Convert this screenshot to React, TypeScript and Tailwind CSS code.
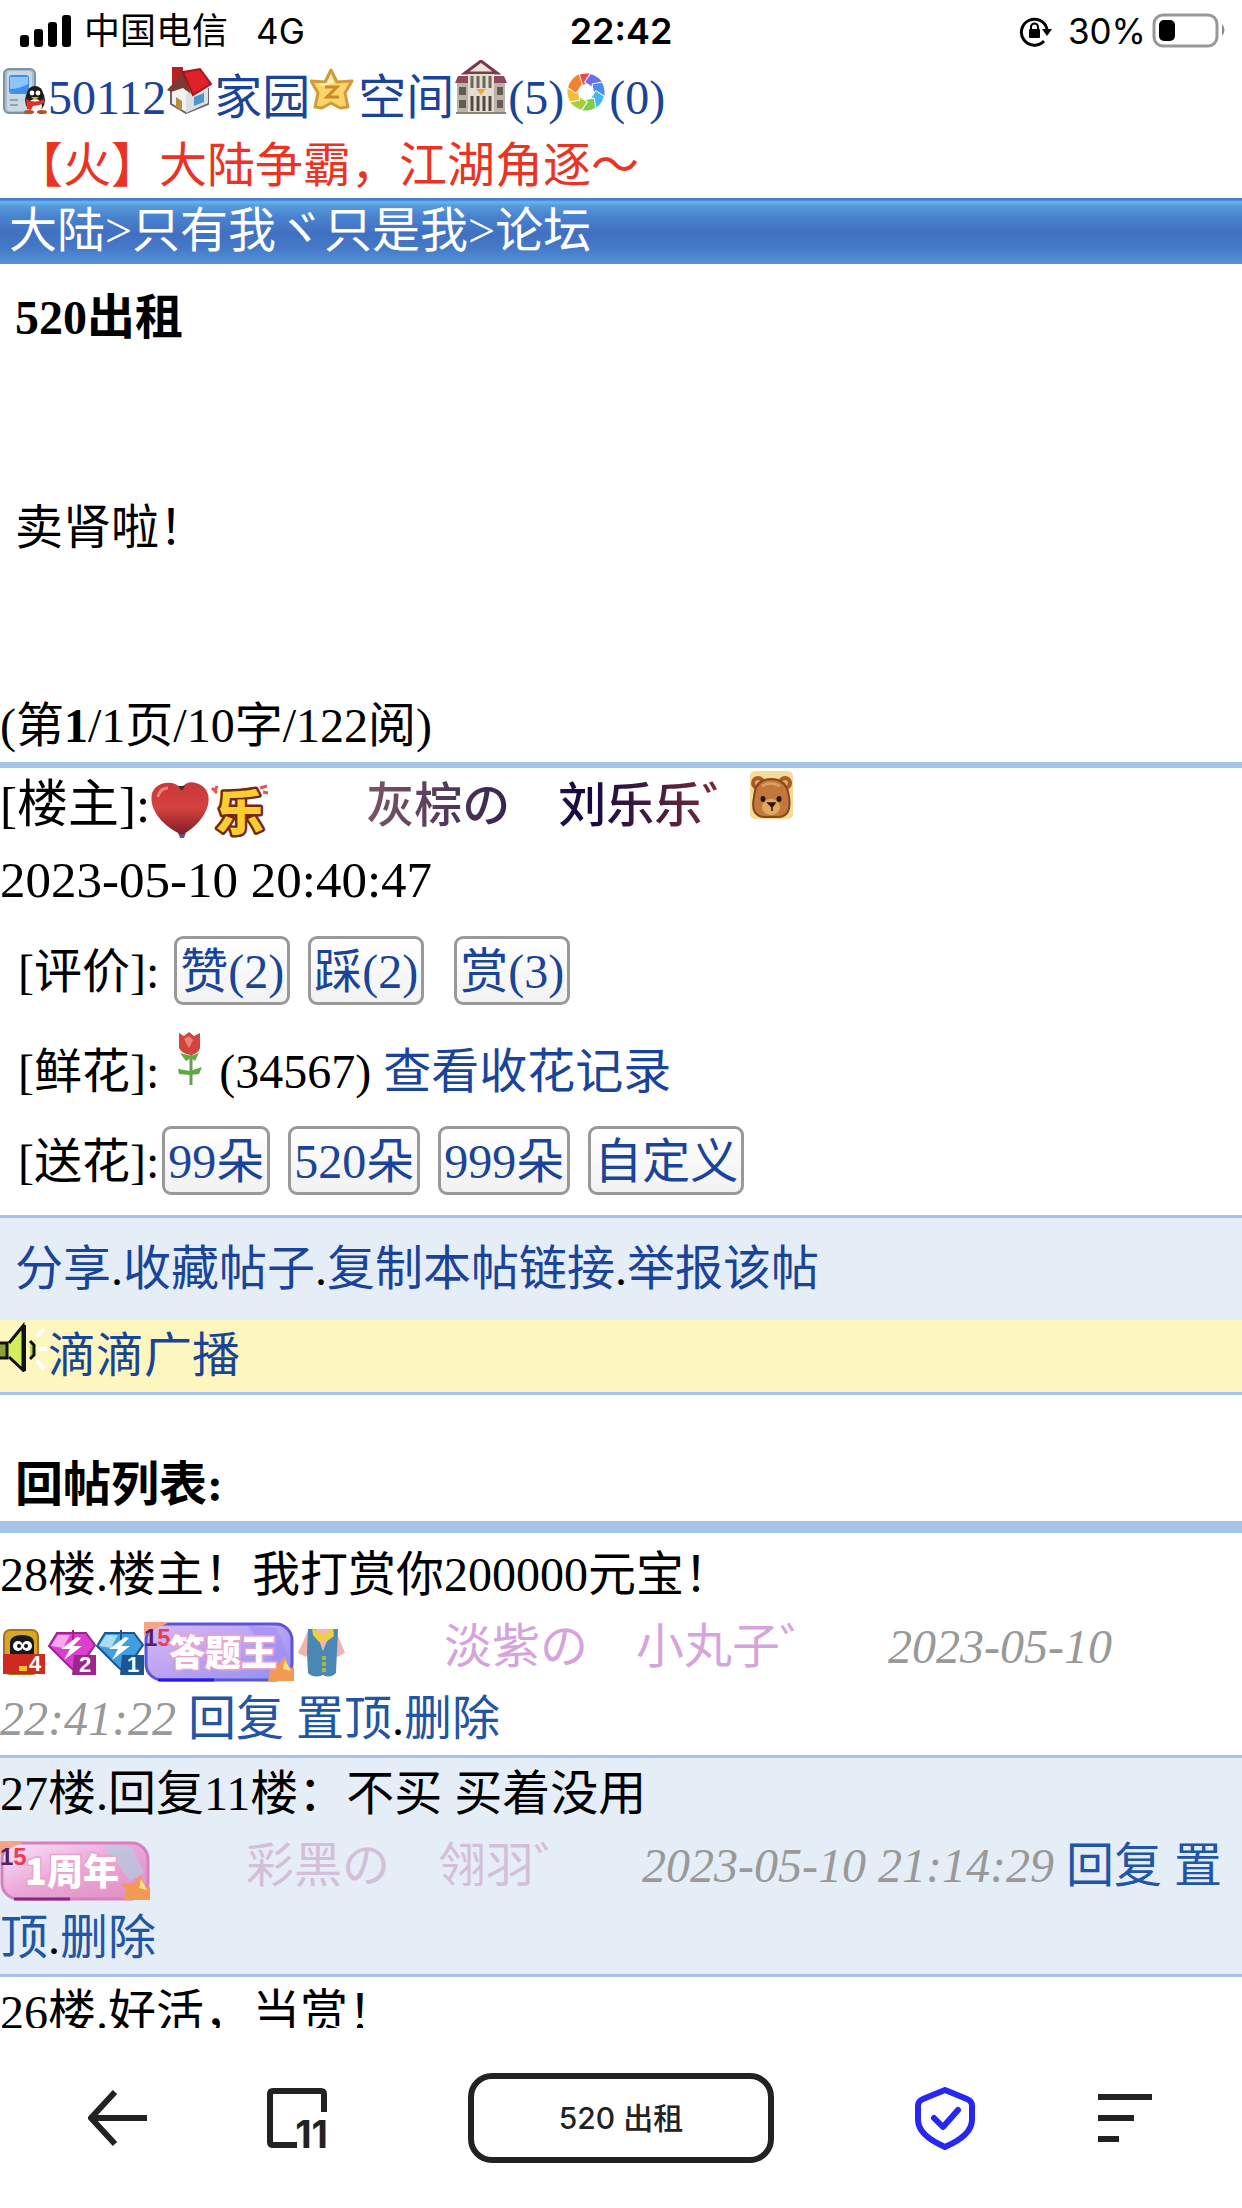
import type { ReactNode } from 'react';

interface Reply {
  id: number;
  texto: string;
  autor: string;
  color: string;
  fecha: string;
  iconos: ReactNode;
}

const inlineIcon = 'inline-block align-baseline';
const badgeIcon = 'inline-block align-middle overflow-visible';

function PhoneIcon() {
  return (
    <svg className={inlineIcon} width="48" height="48" viewBox="0 0 48 48">
      <rect x="4" y="3" width="31" height="44" rx="5" fill="#a9bccb" stroke="#7d92a3" strokeWidth="2" />
      <rect x="7" y="5" width="25" height="40" rx="3" fill="#c9d8e3" />
      <rect x="9" y="9" width="20" height="19" rx="3" fill="#3f8ff0" />
      <path d="M10 11h18v7q-9 5-18 5z" fill="#8cc4fb" />
      <path d="M10 34h8M10 39h8" stroke="#8fa3b3" strokeWidth="2" />
      <ellipse cx="35" cy="34" rx="10" ry="12" fill="#222" />
      <ellipse cx="35" cy="28" rx="8" ry="8" fill="#1b1b1b" />
      <ellipse cx="35" cy="40" rx="7" ry="7" fill="#fff" />
      <circle cx="32" cy="27" r="2.4" fill="#fff" />
      <circle cx="38" cy="27" r="2.4" fill="#fff" />
      <path d="M31 31h8l-4 3z" fill="#f5a623" />
      <path d="M26 33q9 5 18 0v4q-5 3-11 3l-2 4-4-1z" fill="#e0302a" />
      <ellipse cx="29" cy="46" rx="5" ry="2" fill="#b5541c" />
      <ellipse cx="42" cy="46" rx="5" ry="2" fill="#b5541c" />
    </svg>
  );
}

function HouseIcon() {
  return (
    <svg className={inlineIcon} width="48" height="48" viewBox="0 0 48 48">
      <path d="M5 24l15-12 22 11v15L20 47 5 38z" fill="#f4f2f0" stroke="#6d6260" strokeWidth="2" />
      <path d="M20 28l22-8v17L20 47z" fill="#dcdfe2" />
      <path d="M6 1h11v14l-8 7H6z" fill="#b82025" />
      <path d="M1 24L18 6l7 22-8-6-12 4z" fill="#7c3a35" />
      <path d="M17 6L34 3l11 15-18 11z" fill="#dd2228" stroke="#a3161c" strokeWidth="2" />
      <path d="M28 31l10-4v9l-10 4z" fill="#4d94c8" />
      <path d="M10 31l6 4v10l-6-4z" fill="#b78d45" />
    </svg>
  );
}

function StarIcon() {
  return (
    <svg className={inlineIcon} width="48" height="48" viewBox="0 0 48 48">
      <path
        d="M21 4l6 12 15-1-7 12 3 14-8 1-9-5-9 5-7-1 3-14-7-12 14 1z"
        fill="#fbd568"
        stroke="#d29a3c"
        strokeWidth="3"
        strokeLinejoin="round"
      />
      <path d="M21 8l3 9-11 3-5-2 9-1z" fill="#fff3bd" />
      <path d="M15 21h12L17 31h12" fill="none" stroke="#c98a2b" strokeWidth="3" />
    </svg>
  );
}

function BuildingIcon() {
  return (
    <svg className={inlineIcon} width="54" height="54" viewBox="0 0 54 54">
      <path d="M3 18h48v34H3z" fill="#bdb4a8" />
      <path d="M1 23l3-7h46l3 7z" fill="#8e4a5c" />
      <path d="M11 13L27 1l16 12z" fill="#ece6dc" stroke="#7b3a4c" strokeWidth="3" />
      <rect x="14" y="14" width="26" height="38" fill="#e4ddcf" />
      <path d="M18 16v12M24 16v12M30 16v12M36 16v12" stroke="#6d665c" strokeWidth="3" />
      <path d="M18 36v15M24 36v15M30 36v15M36 36v15" stroke="#4f4a44" strokeWidth="3" />
      <path d="M5 27h7v8H5zM43 27h6v8h-6zM5 40h7v8H5zM43 40h6v8h-6z" fill="#625c54" />
      <path d="M22 29h10l-5 6z" fill="#e9a93c" />
      <path d="M2 53h50" stroke="#8c8478" strokeWidth="2" />
    </svg>
  );
}

function WheelIcon() {
  const blades = ['#ea4a50', '#6a6ee8', '#4a8df0', '#45b5f5', '#7ccf4a', '#a5d03c', '#f5bd35', '#f08230'];
  return (
    <svg className={inlineIcon} width="45" height="45" viewBox="0 0 45 45">
      {blades.map((c, i) => (
        <path
          key={c}
          d="M12 7Q20 2 30 5L25 15 14 17z"
          fill={c}
          stroke="#fff"
          strokeWidth="1"
          transform={`rotate(${i * 45} 22 23)`}
        />
      ))}
    </svg>
  );
}

function HeartIcon() {
  return (
    <svg className={badgeIcon} width="60" height="60" viewBox="0 0 60 60">
      <defs>
        <linearGradient id="heart" x1="0" y1="0" x2="0" y2="1">
          <stop offset="0" stopColor="#c8383a" />
          <stop offset="0.5" stopColor="#d5413f" />
          <stop offset="1" stopColor="#7d1c22" />
        </linearGradient>
      </defs>
      <path d="M28 53h8l-2 5h-4z" fill="#4a62a5" />
      <path d="M31 8Q38-1 49 4q12 6 9 21-5 18-26 30Q7 43 2 24-1 9 11 4q12-4 20 4z" fill="url(#heart)" />
      <path d="M28 6h7l-3 5z" fill="#4b2730" />
      <path d="M8 17q2-9 10-9" fill="none" stroke="#e8817a" strokeWidth="3" />
    </svg>
  );
}

function JoyIcon() {
  return (
    <svg className={badgeIcon} width="60" height="60" viewBox="0 0 60 60">
      <path d="M2 8l5 5M7 6l-2 5M50 8l7-2M53 12l5 1" stroke="#e2574f" strokeWidth="3" />
      <text
        x="6"
        y="50"
        fontFamily="Noto Sans CJK SC"
        fontSize="48"
        fontWeight="900"
        fill="#f8cf2c"
        stroke="#742714"
        strokeWidth="5"
        strokeLinejoin="round"
        paintOrder="stroke"
      >
        乐
      </text>
    </svg>
  );
}

function BearIcon() {
  return (
    <svg className={inlineIcon} width="45" height="51" viewBox="0 0 45 51">
      <rect x="0" y="0" width="43" height="48" rx="5" fill="#f6dc9c" />
      <circle cx="8" cy="12" r="7" fill="#a85b26" />
      <circle cx="35" cy="12" r="7" fill="#a85b26" />
      <circle cx="8" cy="12" r="3" fill="#e6a560" />
      <circle cx="35" cy="12" r="3" fill="#e6a560" />
      <path d="M4 26Q5 8 21 8t18 18q3 19-10 20H14Q0 45 4 26z" fill="#c1783a" stroke="#8a4519" strokeWidth="2" />
      <ellipse cx="21" cy="36" rx="9" ry="8" fill="#e3a765" />
      <ellipse cx="13" cy="28" rx="2.5" ry="3" fill="#2c1508" />
      <ellipse cx="29" cy="28" rx="2.5" ry="3" fill="#2c1508" />
      <path d="M18 32h7l-3 4zM22 36v4" fill="#2c1508" stroke="#2c1508" strokeWidth="1.5" />
      <path d="M12 15q9-5 18 0" stroke="#dc9c5b" strokeWidth="3" fill="none" />
    </svg>
  );
}

function RoseIcon() {
  return (
    <svg className={inlineIcon} width="36" height="57" viewBox="0 0 36 57">
      <path d="M20 20v34" stroke="#6a9a5c" strokeWidth="3" />
      <path d="M9 22l11 3 8-3-4 8-4-3-5 3zM7 38l12 2 12-4-3 7-9 1-11-1z" fill="#5bab3f" />
      <path d="M8 2l5 3 5-4 5 4 6-3v15q-2 6-9 7-9-1-12-7z" fill="#d2453f" />
      <path d="M13 8l5-3 4 4-4 8z" fill="#e9827a" />
    </svg>
  );
}

function SpeakerIcon() {
  return (
    <svg className={inlineIcon} width="48" height="51" viewBox="0 -4 48 51">
      <path d="M0 17h9L22 1v44L9 33H0z" fill="#d2ee5c" />
      <path d="M0 18h7v15H0" fill="#8aa336" stroke="#111" strokeWidth="3" />
      <path d="M9 18L23 1v44L9 32" fill="none" stroke="#111" strokeWidth="3" />
      <path d="M25 0v46" stroke="#111" strokeWidth="2" />
      <path d="M30 16l4 4v10l-4 4" fill="#b7d84c" stroke="#111" strokeWidth="3" />
      <path d="M37 12l7-8M39 24h8M37 36l7 8" stroke="#fff" strokeWidth="4" />
    </svg>
  );
}

function LevelIcon() {
  return (
    <svg className={badgeIcon} width="48" height="48" viewBox="0 0 48 48">
      <rect x="4" y="2" width="34" height="44" rx="6" fill="#d9a52b" stroke="#a87413" strokeWidth="2" />
      <path d="M10 28V14q1-7 12-7t12 7v14z" fill="#171a1c" />
      <circle cx="18" cy="18" r="5" fill="#fff" />
      <circle cx="27" cy="18" r="5" fill="#fff" />
      <circle cx="19" cy="18" r="2" fill="#111" />
      <circle cx="26" cy="18" r="2" fill="#111" />
      <rect x="3" y="26" width="42" height="20" fill="#cf2a20" />
      <path d="M19 38h8v5h-8z" fill="#f4c52c" />
      <text x="29" y="43" fontFamily="Liberation Sans" fontSize="22" fontWeight="700" fill="#fff">4</text>
    </svg>
  );
}

function DiamondIcon({ level, base, light, dark }: { level: string; base: string; light: string; dark: string }) {
  return (
    <svg className={badgeIcon} width="48" height="48" viewBox="0 0 48 48">
      <path d="M9 5h29l9 12-16 23q-5 4-9-1L1 18z" fill={base} stroke={dark} strokeWidth="2" />
      <path d="M10 7h12L15 20 3 18z" fill={light} />
      <path d="M25 2v12" stroke={dark} strokeWidth="2" />
      <path d="M29 9L13 21h9l-6 11 18-14h-9l8-8z" fill="#fff" />
      <path d="M26 27h22v20H24z" fill={dark} />
      <text x="31" y="44" fontFamily="Liberation Sans" fontSize="22" fontWeight="700" fill="#fff">{level}</text>
    </svg>
  );
}

function Banner({ id, label, colors }: { id: string; label: string; colors: string[] }) {
  return (
    <svg className={badgeIcon} width="150" height="60" viewBox="0 0 150 60">
      <defs>
        <linearGradient id={id} x1="0" y1="0" x2="1" y2="1">
          <stop offset="0" stopColor={colors[0]} />
          <stop offset="0.5" stopColor={colors[1]} />
          <stop offset="1" stopColor={colors[2]} />
        </linearGradient>
      </defs>
      <rect x="2" y="2" width="146" height="56" rx="16" fill={`url(#${id})`} stroke={colors[3]} strokeWidth="3" />
      <path d="M14 58h56" stroke={colors[4]} strokeWidth="3" />
      <path d="M104 4l28 2 12 26-14 8z" fill={colors[5]} opacity="0.6" />
      <path d="M141 34l3 11 6 1v13h-26l2-10-4-6 13-1z" fill="#f29a52" />
      <path d="M141 38l-2 9 8 2z" fill="#fde08a" />
      <path d="M0 0h26L13 6 0 14z" fill="#f6a487" />
      <text y="24" fontFamily="Liberation Sans" fontSize="24" fontWeight="700">
        <tspan fill="#542063">1</tspan>
        <tspan fill="#ea3a55">5</tspan>
      </text>
      <text
        x="25"
        y="44"
        fontFamily="Noto Sans CJK SC"
        fontSize="36"
        fontWeight="900"
        fill="#fff"
        stroke="#e9a3cd"
        strokeWidth="3"
        paintOrder="stroke"
      >
        {label}
      </text>
    </svg>
  );
}

function VestIcon() {
  return (
    <svg className={badgeIcon} width="54" height="54" viewBox="0 0 54 54">
      <path d="M14 6L4 28l8 4 5-10zM42 6l9 22-8 4-5-10z" fill="#f1b3ae" />
      <path d="M20 4h18l-8 24z" fill="#f0b7ac" />
      <path d="M14 4h7l8 22 9-22h6l-2 44q-6 6-13 2-9 4-15-2L13 28z" fill="#4a87b5" />
      <path d="M18 3l12 8 9-8 1 8-8 6-3-3-4 3-6-7z" fill="#ecd03d" />
      <path d="M30 31v16" stroke="#a4bb42" strokeWidth="4" strokeDasharray="4 2" />
    </svg>
  );
}

const link = 'text-[#1a4499]';
const replyLink = 'text-[#2155a5]';
const actionButton =
  'mx-[3px] inline-block h-[69px] rounded-[9px] border-[3px] border-[#999] bg-linear-to-b from-white to-[#f2f2f2] px-[3px] pt-[3px] leading-[60px] text-[#1a4499]';

const replies: Reply[] = [
  {
    id: 28,
    texto: '28楼.楼主！我打赏你200000元宝！',
    autor: '淡紫の　小丸子゛',
    color: 'text-[#d6a4dc]',
    fecha: '2023-05-10 22:41:22',
    iconos: (
      <>
        <LevelIcon />
        <DiamondIcon level="2" base="#dc3fd0" light="#f7a8ee" dark="#9c2590" />
        <DiamondIcon level="1" base="#3f9fe0" light="#a9dcf7" dark="#1c5590" />
        <Banner
          id="quiz"
          label="答题王"
          colors={['#dcb8f0', '#b9a3f3', '#8f8ff0', '#5a55dc', '#2a18f0', '#9f8cf5']}
        />
        <VestIcon />
      </>
    ),
  },
  {
    id: 27,
    texto: '27楼.回复11楼：不买 买着没用',
    autor: '彩黑の　翎羽゛',
    color: 'text-[#d4bfd8]',
    fecha: '2023-05-10 21:14:29',
    iconos: (
      <Banner
        id="year"
        label="1周年"
        colors={['#f6e6fb', '#eba6d8', '#e08cc0', '#d77fc0', '#8c2585', '#a9d3e2']}
      />
    ),
  },
  { id: 26, texto: '26楼.好活，当赏！', autor: '', color: '', fecha: '', iconos: null },
];

function StatusBar() {
  return (
    <header className="grid h-[60px] shrink-0 grid-cols-[1fr_auto_1fr] items-center px-[15px] pt-[2px] font-[Inter,'Noto_Sans_CJK_SC',sans-serif] leading-none text-black">
      <div className="flex items-center text-[35px]">
        <svg width="57" height="34" viewBox="0 0 57 34">
          <rect x="5" y="21" width="9" height="12" rx="3" />
          <rect x="19" y="15" width="9" height="18" rx="3" />
          <rect x="33" y="8" width="9" height="25" rx="3" />
          <rect x="47" y="1" width="9" height="32" rx="3" />
        </svg>
        <span className="ml-3 text-[36px]">中国电信</span>
        <span className="ml-[28px]">4G</span>
      </div>
      <time className="text-[36px] font-semibold">22:42</time>
      <div className="flex items-center justify-end text-[35px]">
        <svg width="33" height="33" viewBox="0 0 33 33">
          <path d="M25 26A13 13 0 1 1 28 14" fill="none" stroke="#000" strokeWidth="3" />
          <path d="M23 14h10l-5 7z" />
          <path d="M12 15v-3a3.500 3.500 0 0 1 7 0v3" fill="none" stroke="#000" strokeWidth="2" />
          <rect x="10" y="14" width="11" height="9" rx="1" />
        </svg>
        <span className="ml-4">30%</span>
        <svg className="ml-[6px]" width="75" height="36" viewBox="0 0 75 36">
          <rect x="2" y="2" width="63" height="31" rx="9" fill="none" stroke="#999" strokeWidth="3" />
          <rect x="7" y="7" width="16" height="21" rx="5" />
          <path d="M70 11q5 6 0 12z" fill="#888" />
        </svg>
      </div>
    </header>
  );
}

function BottomBar() {
  return (
    <nav className="flex h-[180px] shrink-0 items-center justify-between bg-white px-[87px]">
      <div className="flex gap-[120px]">
        <button type="button" aria-label="后退">
          <svg width="60" height="60" viewBox="0 0 60 60" fill="none" stroke="#222" strokeWidth="6">
            <path d="M60 30H4M28 4L4 30l24 26" strokeLinejoin="round" />
          </svg>
        </button>
        <button type="button" aria-label="窗口">
          <svg className="overflow-visible" width="60" height="60" viewBox="0 0 60 60">
            <path d="M57 24V6q0-3-3-3H6Q3 3 3 6v48q0 3 3 3h24" fill="none" stroke="#222" strokeWidth="6" />
            <text x="61" y="60" textAnchor="end" fontFamily="Inter" fontSize="38" fontWeight="700" fill="#222">11</text>
          </svg>
        </button>
      </div>
      <button
        type="button"
        className="h-[90px] w-[306px] rounded-[24px] border-[6px] border-[#222] font-[Inter,'Noto_Sans_CJK_SC',sans-serif] text-[30px] leading-none font-medium text-[#222]"
      >
        520 出租
      </button>
      <div className="flex gap-[120px]">
        <button type="button" aria-label="安全">
          <svg width="60" height="64" viewBox="0 0 60 64" fill="none" stroke="#2727f5">
            <path
              d="M30 4L52 13q5 2 5 7v14q0 15-27 27Q3 49 3 34V20q0-5 5-7z"
              strokeWidth="6"
              strokeLinejoin="round"
            />
            <path d="M19 32l9 9 15-17" strokeWidth="6" strokeLinecap="round" strokeLinejoin="round" />
          </svg>
        </button>
        <button type="button" aria-label="菜单">
          <svg width="60" height="60" viewBox="0 0 60 60" fill="none" stroke="#222" strokeWidth="6">
            <path d="M3 9h54M3 30h36M3 51h21" />
          </svg>
        </button>
      </div>
    </nav>
  );
}

export default function App() {
  return (
    <div className="flex h-screen flex-col bg-white font-['Liberation_Serif','Noto_Sans_CJK_SC',serif] text-[48px] leading-[72px] text-black">
      <StatusBar />

      <main className="min-h-0 flex-1 overflow-hidden">
        <div className={link}>
          <PhoneIcon />
          <a href="#uid">50112</a>
          <HouseIcon />
          <a href="#home">家园</a>
          <StarIcon />
          <a href="#space">空间</a>
          <BuildingIcon />
          <a href="#family">(5)</a>
          <WheelIcon />
          <a href="#circle">(0)</a>
        </div>
        <div className="px-[15px] leading-[64px]">
          <a href="#war" className="text-[#ea3323]">【火】大陆争霸，江湖角逐～</a>
        </div>

        <div className="bg-[linear-gradient(to_bottom,#3f78c8_0px,#4a86d4_2px,#6cb2f3_4px,#549bdc_8px,#4a83cf_18px,#4070c1_36px,#4579c8_50px,#5592d8_66px)] px-[9px] leading-[66px] text-white">
          <a href="#land">大陆</a>&gt;<a href="#clan">只有我ヾ只是我</a>&gt;<a href="#forum">论坛</a>
        </div>

        <h1 className="px-[15px] font-bold leading-[108px]">520出租</h1>
        <p className="px-[15px] pt-[120px] pb-[126px]">卖肾啦！</p>
        <p className="border-b-[6px] border-[#a5c2e9]">
          (第<b>1</b>/1页/10字/122阅)
        </p>

        <div className="text-[51px] leading-[74px]">
          [楼主]:
          <HeartIcon />
          <JoyIcon />
          <a href="#author" className="text-[48px]">
            {'　　'}
            <span className="bg-linear-to-r from-[#7c5566] via-[#160540] via-58% to-[#98282a] bg-clip-text font-medium text-transparent">
              灰棕の　刘乐乐゛
            </span>
            <BearIcon />
          </a>
          <br />
          2023-05-10 20:40:47
        </div>

        <div className="px-[18px] pb-[8px] leading-[90px]">
          <div className="leading-[110px]">
            [评价]: <button type="button" className={actionButton}>赞(2)</button>{' '}
            <button type="button" className={actionButton}>踩(2)</button>
            {'\u00a0 '}
            <button type="button" className={actionButton}>赏(3)</button>
          </div>
          <div>
            [鲜花]: <RoseIcon /> (34567) <a href="#flowers" className={link}>查看收花记录</a>
          </div>
          <div>
            [送花]:<button type="button" className={actionButton}>99朵</button>{' '}
            <button type="button" className={actionButton}>520朵</button>{' '}
            <button type="button" className={actionButton}>999朵</button>{' '}
            <button type="button" className={actionButton}>自定义</button>
          </div>
        </div>

        <div className="border-t-[3px] border-[#a5c2e9] bg-[#e5edf7] px-[15px] leading-[102px]">
          <a href="#share" className={link}>分享</a>.<a href="#save" className={link}>收藏帖子</a>.
          <a href="#copy" className={link}>复制本帖链接</a>.<a href="#report" className={link}>举报该帖</a>
        </div>
        <div className="border-b-[3px] border-[#a5c2e9] bg-[#fdf7bf]">
          <SpeakerIcon />
          <a href="#radio" className={link}>滴滴广播</a>
        </div>

        <h2 className="border-b-[12px] border-[#a5c2e9] px-[15px] pt-[54px] font-bold">回帖列表:</h2>

        <ul className="pt-[6px]">
          {replies.map(r => (
            <li key={r.id} className="border-b-[3px] border-[#a5c2e9] even:bg-[#e5edf7]">
              <p>{r.texto}</p>
              {r.autor && (
                <div>
                  {r.iconos}
                  <a href="#user" className={r.color}>　　{r.autor}</a>
                  {'　 '}
                  <i className="text-[#999]">{r.fecha}</i> <a href="#reply" className={replyLink}>回复</a>{' '}
                  <a href="#top" className={replyLink}>置顶</a>.<a href="#delete" className={replyLink}>删除</a>
                </div>
              )}
            </li>
          ))}
        </ul>
      </main>

      <BottomBar />
    </div>
  );
}
